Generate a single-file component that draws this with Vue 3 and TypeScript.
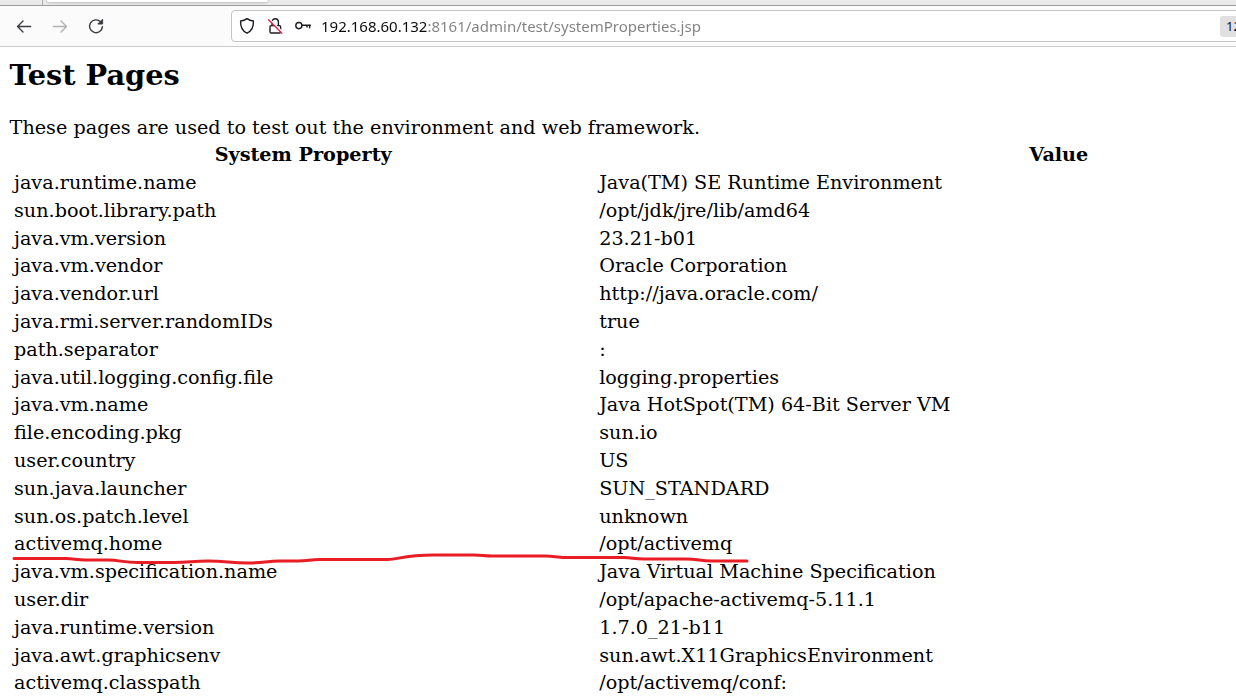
<script setup lang="ts">
import { ref } from 'vue'

interface Property {
  name: string
  value: string
}

const address = ref('192.168.60.132:8161/admin/test/systemProperties.jsp')

const properties: Property[] = [
  { name: 'java.runtime.name', value: 'Java(TM) SE Runtime Environment' },
  { name: 'sun.boot.library.path', value: '/opt/jdk/jre/lib/amd64' },
  { name: 'java.vm.version', value: '23.21-b01' },
  { name: 'java.vm.vendor', value: 'Oracle Corporation' },
  { name: 'java.vendor.url', value: 'http://java.oracle.com/' },
  { name: 'java.rmi.server.randomIDs', value: 'true' },
  { name: 'path.separator', value: ':' },
  { name: 'java.util.logging.config.file', value: 'logging.properties' },
  { name: 'java.vm.name', value: 'Java HotSpot(TM) 64-Bit Server VM' },
  { name: 'file.encoding.pkg', value: 'sun.io' },
  { name: 'user.country', value: 'US' },
  { name: 'sun.java.launcher', value: 'SUN_STANDARD' },
  { name: 'sun.os.patch.level', value: 'unknown' },
  { name: 'activemq.home', value: '/opt/activemq' },
  { name: 'java.vm.specification.name', value: 'Java Virtual Machine Specification' },
  { name: 'user.dir', value: '/opt/apache-activemq-5.11.1' },
  { name: 'java.runtime.version', value: '1.7.0_21-b11' },
  { name: 'java.awt.graphicsenv', value: 'sun.awt.X11GraphicsEnvironment' },
  { name: 'activemq.classpath', value: '/opt/activemq/conf:' },
]
</script>

<template>
  <div class="browser">
    <div class="tabs">
      <span class="tabs-start"></span>
      <span class="tab"></span>
    </div>

    <header class="toolbar">
      <nav class="nav">
        <button type="button" class="nav-button" aria-label="Back">
          <svg viewBox="0 0 16 16" width="16" height="16">
            <path d="M14.6 8.5H1.8M7 3L1.5 8.5L7 14" />
          </svg>
        </button>
        <button type="button" class="nav-button" aria-label="Forward" disabled>
          <svg viewBox="0 0 16 16" width="16" height="16">
            <path d="M1.4 8.5H14.2M9 3L14.5 8.5L9 14" />
          </svg>
        </button>
        <button type="button" class="nav-button" aria-label="Reload">
          <svg viewBox="0 0 16 16" width="16" height="16">
            <path d="M12.6 3.8A6.4 6.4 0 1 0 14.4 8.6" />
            <path class="solid" d="M14.6 1.6V6H10.2Z" />
          </svg>
        </button>
      </nav>

      <div class="address-bar">
        <button type="button" class="site-button" aria-label="Tracking protection">
          <svg viewBox="0 0 16 18" width="16" height="18">
            <path d="M8 1.6C9.8 3 12 3.8 14.4 4C14.7 9.6 12.6 14 8 16.2C3.4 14 1.3 9.6 1.6 4C4 3.8 6.2 3 8 1.6Z" />
          </svg>
        </button>
        <button type="button" class="site-button" aria-label="Connection not secure">
          <svg viewBox="0 0 16 18" width="16" height="18">
            <path d="M5 8.6V5C5 3.1 6.4 1.8 8.2 1.8C10 1.8 11.4 3.1 11.4 5V8.6" />
            <path d="M4.2 8.6H12.4Q13.6 8.6 13.6 9.8V14.8Q13.6 16 12.4 16H4.2Q3 16 3 14.8V9.8Q3 8.6 4.2 8.6Z" />
            <path class="gap" d="M2.6 2L15.6 15.2" />
            <path class="slash" d="M1.6 2.8L14.8 16.2" />
          </svg>
        </button>
        <button type="button" class="site-button" aria-label="Saved login">
          <svg viewBox="0 0 16 18" width="16" height="18">
            <circle cx="3.9" cy="8.6" r="3.1" />
            <path d="M7.2 8.2H15.4M14.6 8.2V10.8M12 8.2V10" />
          </svg>
        </button>
        <input v-model="address" class="address" type="text" aria-label="Address" spellcheck="false" />
        <button type="button" class="zoom-level">120%</button>
      </div>
    </header>

    <main class="viewport">
      <div class="document">
        <h2>Test Pages</h2>
        <p>These pages are used to test out the environment and web framework.</p>
        <table>
          <colgroup>
            <col class="name-column" />
            <col class="value-column" />
          </colgroup>
          <thead>
            <tr>
              <th scope="col">System Property</th>
              <th scope="col">Value</th>
            </tr>
          </thead>
          <tbody>
            <tr v-for="property in properties" :key="property.name">
              <td>{{ property.name }}</td>
              <td>{{ property.value }}</td>
            </tr>
          </tbody>
        </table>
      </div>
      <svg class="marker" viewBox="0 0 740 16" width="740" height="16" aria-hidden="true">
        <path
          d="M4 5.5H56C64 5.5 66 7 76 7H98C110 7 112 9.5 128 9.5H164C180 9.5 182 8 198 8C216 8 220 10 238 10C254 10 256 8 270 8H288C298 8 300 6.5 310 6.5H378C388 6.5 394 2 424 2H464C472 2 474 3 482 3H536C544 3 548 4.5 560 4.5H614C622 4.5 624 6 634 6H676C688 6 690 8 702 8H737"
        />
      </svg>
    </main>
  </div>
</template>

<style>
body {
  margin: 0;
}
</style>

<style scoped>
.browser {
  display: flex;
  flex-direction: column;
  height: 100vh;
  overflow: hidden;
  background: #fff;
}

.tabs {
  display: flex;
  flex: none;
  height: 5px;
  gap: 4px;
  overflow: hidden;
  background: #eaeaea;
  border-bottom: 1px solid #9c9c9f;
}

.tabs-start {
  width: 42px;
  border-right: 1px solid #aaa;
}

.tab {
  width: 221px;
  height: 2px;
  background: #fff;
  border-radius: 0 0 4px 4px;
  box-shadow: 0 0 3px rgba(0, 0, 0, 0.45);
}

.toolbar {
  display: flex;
  flex: none;
  align-items: center;
  height: 40px;
  overflow: hidden;
  background: #fbfbfb;
  border-bottom: 1px solid #ccc;
}

button {
  display: flex;
  align-items: center;
  justify-content: center;
  padding: 0;
  background: none;
  border: 0;
}

svg {
  display: block;
  fill: none;
  stroke: currentColor;
  stroke-width: 1.4;
  stroke-linecap: round;
  stroke-linejoin: round;
}

.nav {
  display: flex;
  flex: none;
  width: 225px;
  padding-left: 6px;
}

.nav-button {
  width: 36px;
  height: 32px;
  color: #3b3b40;
}

.nav-button:disabled {
  color: #b1b1b3;
}

.solid {
  fill: currentColor;
  stroke-width: 1;
}

.address-bar {
  display: flex;
  flex: none;
  align-items: center;
  box-sizing: border-box;
  width: calc(100% - 139px);
  height: 32px;
  padding: 0 59px 0 1px;
  background: #fff;
  border: 1px solid #c4c4c6;
  border-radius: 4px;
}

.site-button {
  width: 28px;
  height: 28px;
  color: #1c1b22;
}

.gap {
  stroke: #fff;
}

.slash {
  stroke: #e22850;
}

.address {
  flex: 1;
  min-width: 0;
  height: 28px;
  margin-left: 4px;
  padding: 0;
  font: 15px 'Noto Sans', sans-serif;
  color: #808080;
  -webkit-text-fill-color: transparent;
  background: linear-gradient(90deg, #0c0c0d 107px, #808080 107px);
  -webkit-background-clip: text;
  background-clip: text;
  border: 0;
  outline: 0;
}

.zoom-level {
  justify-content: flex-start;
  width: 48px;
  height: 21px;
  padding-left: 6px;
  font: 13px 'Noto Sans', sans-serif;
  color: #15141a;
  background: #e0e0e1;
  border-radius: 3px;
}

.viewport {
  position: relative;
  flex: 1;
  min-height: 0;
  overflow: hidden;
}

/* The document is viewed at the level shown in the address bar. */
.document {
  zoom: 1.2;
  padding: 9px 8px;
  font: 16px 'DejaVu Serif', serif;
  color: #000;
}

h2 {
  margin: 0 0 20px;
  font-size: 24px;
}

p {
  margin: 0;
}

table {
  width: 1261px;
  margin-top: 1px;
  line-height: 1.22;
  table-layout: fixed;
  border-spacing: 2px;
}

.name-column {
  width: 486px;
}

th,
td {
  padding: 1px 2px;
}

.marker {
  position: absolute;
  top: 506px;
  left: 10px;
  color: #ea1c24;
  stroke-width: 3;
}
</style>
